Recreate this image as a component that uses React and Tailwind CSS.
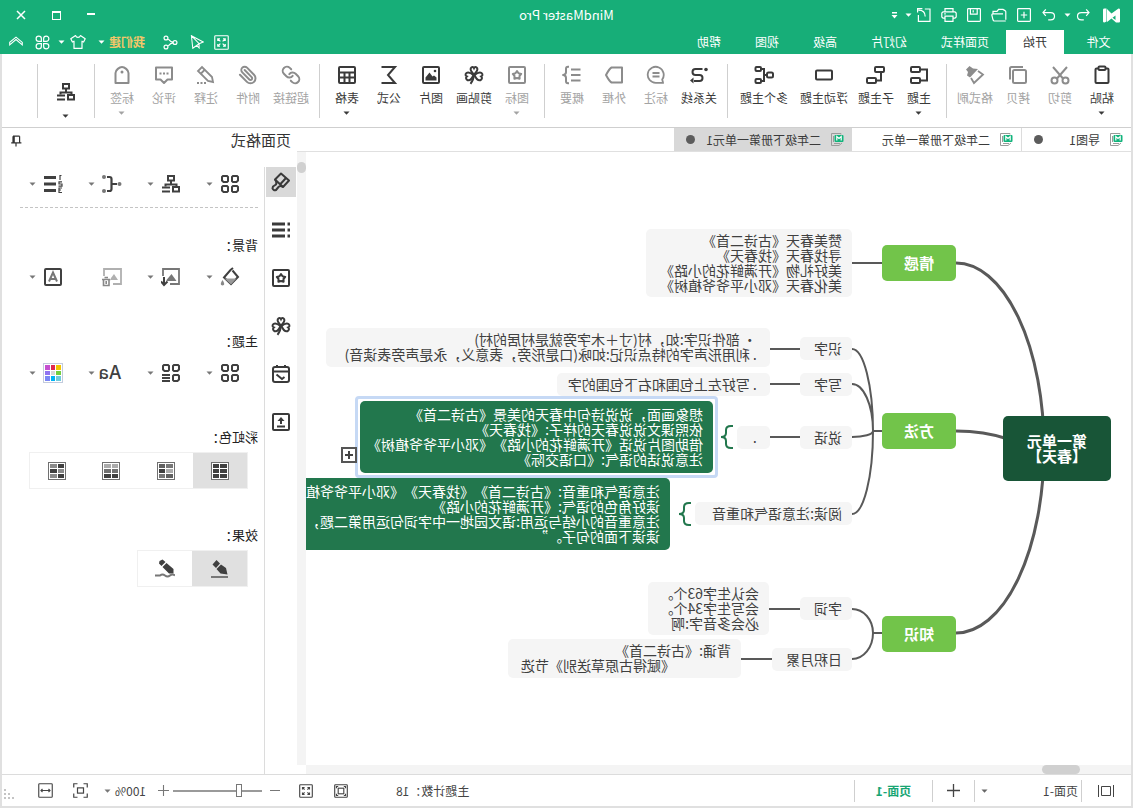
import React, { useState } from "react";
import clsx from "clsx";
import { Link, Paperclip } from "lucide-react";

const Icon = ({ size = 20, w = 2, className, children }) => (
  <svg
    width={size}
    height={size}
    viewBox="0 0 20 20"
    fill="none"
    stroke="currentColor"
    strokeWidth={w}
    className={clsx("shrink-0", className)}
    aria-hidden="true"
  >
    {children}
  </svg>
);

const Caret = ({ className }) => (
  <svg width="7" height="4" viewBox="0 0 7 4" fill="currentColor" className={clsx("shrink-0", className)} aria-hidden="true">
    <path d="M0.5 0.5h6L3.5 3.8z" />
  </svg>
);

const clover = (
  <>
    <path d="M10 9.500C7.500 7 5.800 5.500 6.800 3.200C7.800 1.200 9.500 1.800 10 3C10.500 1.800 12.200 1.200 13.200 3.200C14.200 5.500 12.500 7 10 9.500z" />
    <path d="M9.500 10C7 8 4.500 6.500 2.500 8C0.800 9.500 1.600 11 2.800 11.400C1.600 12.500 1.800 14.500 3.600 15.200C6 16 8 13.500 9.500 10z" />
    <path d="M10.500 10C13 8 15.500 6.500 17.500 8C19.200 9.500 18.400 11 17.200 11.400C18.400 12.500 18.200 14.500 16.400 15.200C14 16 12 13.500 10.500 10z" />
    <path d="M10 9.500C10.300 13 11 16 13.500 18.800" />
  </>
);

const badge = (
  <>
    <rect x="2" y="2" width="16" height="16" rx="1" />
    <path d="M10 6l1.500 2.200 2.700.7-1.700 2.100.1 2.800L10 13l-2.600.8.1-2.800-1.700-2.100 2.700-.7z" strokeLinejoin="round" />
  </>
);

const orgChart = (
  <>
    <rect x="7" y="2" width="6" height="4.500" />
    <path d="M10 7v3M4.500 12.500V10.500h11V12.500" />
    <rect x="2" y="13" width="6" height="4.500" />
    <path d="M11 13.500h8M11 17.500h8" />
  </>
);

const fourSquares = (
  <>
    <path d="M3 2h4l1 1v4L7 8H3.500L2 6.500V3z" />
    <path d="M13 2h4l1 1v3.500L16.500 8H13l-1-1V3z" />
    <path d="M3 12h4l1 1v4l-1 1H3.500L2 16.500V13z" />
    <path d="M13 12h4l1 1v3.500L16.500 18H13l-1-1v-4z" />
  </>
);

const icons = {
  paste: (
    <>
      <path d="M6 3.500H4.500a1 1 0 0 0-1 1V17a1 1 0 0 0 1 1h11a1 1 0 0 0 1-1V4.500a1 1 0 0 0-1-1H14" />
      <rect x="6.500" y="1.500" width="7" height="3.500" rx="1" />
    </>
  ),
  cut: (
    <>
      <path d="M3 2l10 11.500M17 2L7 13.500" />
      <circle cx="4.500" cy="15.500" r="3" />
      <circle cx="15.500" cy="15.500" r="3" />
    </>
  ),
  copy: (
    <>
      <rect x="2" y="5" width="13" height="13" rx="1.500" />
      <path d="M5 2h11.500A1.500 1.500 0 0 1 18 3.500V14.500" />
    </>
  ),
  brush: (
    <>
      <path d="M7 6L2 9.500l9 8.500 3-5" strokeWidth="1.800" />
      <path d="M19 4.500L15.500 1 12 3.500 7 4l8 8.500 3-2-1-3.500z" fill="currentColor" stroke="none" />
    </>
  ),
  topic: (
    <>
      <rect x="9" y="2" width="9" height="5" rx="1" />
      <rect x="9" y="13" width="9" height="5" rx="1" />
      <path d="M9 4.500H2v11h7" />
    </>
  ),
  subtopic: (
    <>
      <rect x="2" y="2" width="9" height="5" rx="1" />
      <rect x="10" y="13" width="9" height="5" rx="1" />
      <path d="M5 7v8.500h5" />
    </>
  ),
  floating: <rect x="2" y="5.500" width="16" height="9" rx="1" />,
  multi: (
    <>
      <rect x="1" y="7.500" width="6" height="5" rx="1.500" />
      <rect x="13" y="2" width="5.500" height="4" rx="1" />
      <rect x="13" y="14" width="5.500" height="4" rx="1" />
      <path d="M7 10h3M13 4h-3v12h3" />
    </>
  ),
  relation: (
    <>
      <path d="M6.500 4h7a3 3 0 0 1 0 6h-4a3 3 0 0 0 0 6H15" />
      <circle cx="3" cy="4.500" r="1.800" fill="currentColor" stroke="none" />
      <path d="M15.500 12.500l3.500 3-3.500 3z" fill="currentColor" stroke="none" />
    </>
  ),
  callout: (
    <>
      <path d="M3 17.500l.8-3A8 8 0 1 1 10 17.800H3z" strokeWidth="1.800" />
      <path d="M6.500 8h7M6.500 11.500h7" strokeWidth="1.800" />
    </>
  ),
  boundary: <path d="M2 2.500h10.500q2 1 5.500 7.500-3.500 6.500-5.500 7.500H2z" strokeLinejoin="round" />,
  summary: (
    <>
      <path d="M1.500 4.500h9.500M1.500 10h9.500M1.500 15.500h9.500" />
      <path d="M13 1.800h1q2 0 2 2v3.500q0 2 2.500 2.700-2.500.7-2.500 2.700v3.500q0 2-2 2h-1" />
    </>
  ),
  badge,
  clover,
  image: (
    <>
      <rect x="2" y="2" width="16" height="16" rx="1" />
      <path d="M4.500 15.500v-3l2.500-2 1.500 1 3-4 4 5v3z" fill="currentColor" stroke="none" />
      <circle cx="6" cy="6" r="1.300" fill="currentColor" stroke="none" />
    </>
  ),
  sigma: <path d="M17.500 2H4l7 8-7 8h13.500" />,
  table: (
    <>
      <rect x="2" y="2" width="16" height="16" rx="1" />
      <path d="M2 7.500h16M2 12.500h16M7.500 7.500V18M12.500 7.500V18" />
    </>
  ),
  pencil: (
    <>
      <path d="M3 17l1-5L14 2l4 4L8 16z" strokeWidth="1.800" />
      <path d="M11 4.500l4.500 4.500" strokeWidth="1.800" />
      <path d="M10 18h2M13.500 18h2M17 18h2" />
    </>
  ),
  comment: (
    <>
      <path d="M2 2.500h16v12h-4.500L10 18l-3.500-3.500H2z" strokeLinejoin="round" />
      <path d="M5.500 8.500h2M9 8.500h2M12.500 8.500h2" />
    </>
  ),
  tag: (
    <>
      <path d="M3.500 18V8C3.500 5 7.500 2 10 2s6.500 3 6.500 6v10z" strokeLinejoin="round" />
      <circle cx="10" cy="7" r="1.500" fill="currentColor" stroke="none" />
    </>
  ),
};

const quickIcons = {
  undo: <path d="M6 3L2.500 7 6 11M3 7h9c6.500 0 6.500 9 0 9H9" />,
  redo: <path d="M14 3l3.500 4L14 11M17 7H8C1.500 7 1.500 16 8 16h3" />,
  add: (
    <>
      <rect x="2" y="2" width="16" height="16" rx="1" />
      <path d="M10 6v8M6 10h8" />
    </>
  ),
  open: <path d="M1.500 16V6q0-1 1-1.500L5 3h5.500l2 2.500h5v3M1.500 17.500h14.500q1 0 1.500-1.500l1.500-6q0-1.500-1.500-1.500H5" />,
  save: (
    <>
      <rect x="2" y="2" width="16" height="16" rx="1" />
      <path d="M6 2v7h8.500V2M11 4v3" />
    </>
  ),
  print: (
    <>
      <path d="M5 6V2h10v4M5 14H2.500L1 12.500V7.500L2.500 6h15L19 7.500v5L17.500 14H15" />
      <path d="M5 11.500h10V18H5zM14 8.500h2" />
    </>
  ),
  export: <path d="M9 2.500H2.500v15.500H17V10M8.500 12c0-5 3-8 8.500-8M12 2h6v5" />,
};

const ribbon = [
  [
    { label: "粘贴", icon: "paste", caret: true },
    { label: "剪切", icon: "cut", off: true },
    { label: "拷贝", icon: "copy", off: true },
    { label: "格式刷", icon: "brush", off: true },
  ],
  [
    { label: "主题", icon: "topic", caret: true },
    { label: "子主题", icon: "subtopic" },
    { label: "浮动主题", icon: "floating" },
    { label: "多个主题", icon: "multi" },
  ],
  [
    { label: "关系线", icon: "relation" },
    { label: "标注", icon: "callout", off: true },
    { label: "外框", icon: "boundary", off: true },
    { label: "概要", icon: "summary", off: true },
  ],
  [
    { label: "图标", icon: "badge", off: true, caret: true },
    { label: "剪贴画", icon: "clover" },
    { label: "图片", icon: "image" },
    { label: "公式", icon: "sigma" },
    { label: "表格", icon: "table", caret: true },
  ],
  [
    { label: "超链接", lucide: Link, off: true },
    { label: "附件", lucide: Paperclip, off: true },
    { label: "注释", icon: "pencil", off: true },
    { label: "评论", icon: "comment", off: true },
    { label: "标签", icon: "tag", off: true, caret: true },
  ],
];

const itemWidth = { 2: "w-[42px]", 3: "w-[44px]", 4: "w-[60px]" };

const menus = [
  { label: "文件", style: "w-[69px]" },
  { label: "开始", style: "w-[58px]" },
  { label: "页面样式", style: "w-[82px]" },
  { label: "幻灯片", style: "w-[70px]" },
  { label: "高级", style: "w-[58px]" },
  { label: "视图", style: "w-[58px]" },
  { label: "帮助", style: "w-[58px]" },
];

const TitleBar = () => (
  <div className="relative flex h-[30px] items-center pl-[13px] text-white">
    <svg width="17" height="15" viewBox="0 0 17 15" fill="currentColor" aria-hidden="true">
      <path d="M0 1.500Q0 .5 1.500 .5L8.500 5.500 13 1V14L8.500 10.500 4 14.500H1Q0 14.500 0 13.500z" />
      <path d="M13.500 .5H15.500Q17 .5 17 1.500V13.500Q17 14.500 15.500 14.500L13.500 13.500z" />
      <path d="M4.500 7.500L7.500 9.800 4.500 12z" fill="#17ae78" />
    </svg>
    <button aria-label="撤销" className="ml-3"><Icon size={16} w={1.500}>{quickIcons.undo}</Icon></button>
    <Caret className="ml-1" />
    <div className="ml-[7px] flex items-center gap-[9px]">
      {["redo", "add", "open", "save", "print", "export"].map((name) => (
        <button key={name} aria-label={name}>
          <Icon size={16} w={1.500}>{quickIcons[name]}</Icon>
        </button>
      ))}
    </div>
    <Caret className="ml-1" />
    <button aria-label="更多" className="ml-[7px]">
      <svg width="7" height="7" viewBox="0 0 7 7" fill="currentColor">
        <path d="M1 0h5v1.500H1zM0.500 3h6L3.500 6.500z" />
      </svg>
    </button>
    <div className="absolute left-1/2 -translate-x-1/2 text-[13px]">MindMaster Pro</div>
    <div className="ml-auto flex items-center gap-[26px] pr-4">
      <button aria-label="最小化" className="mt-1 h-2 w-2 border-t-2 border-white" />
      <button aria-label="最大化" className="h-[9px] w-[9px] border border-t-2 border-white" />
      <button aria-label="关闭">
        <Icon size={10} w={3}><path d="M2 2l16 16M18 2L2 18" /></Icon>
      </button>
    </div>
  </div>
);

const MenuBar = () => {
  const [active, setActive] = useState("开始");

  return (
    <nav className="flex h-6 items-center text-xs text-white">
      <div className="flex h-full">
        {menus.map((item) => (
          <button
            key={item.label}
            onClick={() => setActive(item.label)}
            className={clsx("h-full", item.style, active === item.label && "bg-white text-[#333]")}
          >
            {item.label}
          </button>
        ))}
      </div>
      <div className="ml-auto flex items-center pr-[9px]">
        <button aria-label="全屏" className="mr-[10px]">
          <Icon size={15} w={1.500}>
            <rect x="1" y="1" width="18" height="18" rx="1" />
            <path d="M5 8V5h3M12 5h3v3M15 12v3h-3M8 15H5v-3M5 5l3.500 3.500M15 5l-3.500 3.500M15 15l-3.500-3.500M5 15l3.500-3.500" />
          </Icon>
        </button>
        <button aria-label="发送" className="mr-3">
          <Icon size={14} w={1.500}><path d="M18 1L1 10l6 2.500L16 19zM18 1L7 12.500v6l3.500-3.500" /></Icon>
        </button>
        <button aria-label="分享" className="mr-[18px]">
          <Icon size={15} w={1.600}>
            <circle cx="4" cy="10" r="2.600" />
            <circle cx="16" cy="4" r="2.600" />
            <circle cx="16" cy="16" r="2.600" />
            <path d="M6.500 9.500c3 0 4-1 6.500-4M6.500 10.500c3 0 4 1 6.500 4" />
          </Icon>
        </button>
        <button className="flex items-center font-bold text-[#f3c669]">
          我们建
          <Caret className="ml-1 text-white" />
        </button>
        <button aria-label="皮肤" className="ml-3 flex items-center gap-[5px]">
          <Icon size={16} w={1.500}>
            <path d="M7 2L1 6l2 4 2-1v9h10V9l2 1 2-4-6-4c-1 3-5 3-6 0z" strokeLinejoin="round" />
          </Icon>
          <Caret />
        </button>
        <button aria-label="应用" className="ml-2">
          <Icon size={15} w={1.600}>
            <path d="M8.500 8.500H5A3.500 3.500 0 1 1 8.500 5zM11.500 8.500V5A3.500 3.500 0 1 1 15 8.500zM8.500 11.500V15A3.500 3.500 0 1 1 5 11.500zM11.500 11.500H15a3.500 3.500 0 1 1-3.500 3.500z" />
          </Icon>
        </button>
        <button aria-label="收起" className="ml-3">
          <Icon size={14} w={1.500}><path d="M1 10.500l9-7.500 9 7.500v3.500l-9-7.500-9 7.500z" /></Icon>
        </button>
      </div>
    </nav>
  );
};

const Separator = () => <div className="mx-[6px] h-[54px] w-px bg-[#cfcfcf]" />;

const Ribbon = () => (
  <div className="flex h-[74px] items-start border-b border-[#cfcfcf] bg-white pt-[10px] pl-2 text-xs">
    {ribbon.map((group, i) => (
      <React.Fragment key={i}>
        {group.map((item) => (
          <button
            key={item.label}
            className={clsx(
              "flex shrink-0 flex-col items-center whitespace-nowrap",
              itemWidth[item.label.length],
              item.off ? "text-[#a3a3a3]" : "text-[#3a3a3a]"
            )}
          >
            {item.lucide ? (
              <item.lucide size={20} strokeWidth={2.4} className="mt-px text-[#8c8c8c]" />
            ) : (
              <Icon className={clsx("mt-px", item.off && "text-[#8c8c8c]")}>{icons[item.icon]}</Icon>
            )}
            <span className="mt-[5px] leading-4">{item.label}</span>
            {item.caret && <Caret className="mt-[5px]" />}
          </button>
        ))}
        <Separator />
      </React.Fragment>
    ))}
    <button aria-label="布局" className="flex w-[44px] flex-col items-center pt-[18px] text-[#3a3a3a]">
      <Icon>{orgChart}</Icon>
      <Caret className="mt-3" />
    </button>
    <Separator />
  </div>
);

const DocIcon = () => (
  <svg width="14" height="15" viewBox="0 0 14 15" fill="none" aria-hidden="true">
    <path d="M3 2.500V1.500h9.500v12H5L2 11" stroke="#9b9b9b" />
    <path d="M4 11.500h6M10.500 4v6" stroke="#9b9b9b" />
    <rect x="0.500" y="3" width="9" height="7" rx="1" fill="#12b47c" />
    <path d="M2.800 8.500v-4L5 6.500l2.200-2v4" stroke="#fff" strokeWidth="1.200" />
  </svg>
);

const docs = [
  { name: "导图1", dirty: true, style: "w-[110px] border-r border-[#dcdcdc]" },
  { name: "二年级下册第一单元", style: "w-[169px]" },
  { name: "二年级下册第一单元1", dirty: true, style: "w-[178px] bg-[#d8d8d8]" },
];

const DocTabs = () => (
  <div className="flex h-6 border-b border-[#e0e0e0]">
    {docs.map((doc) => (
      <button key={doc.name} className={clsx("flex items-center pl-2 text-xs text-[#3a3a3a]", doc.style)}>
        <DocIcon />
        <span className="ml-[9px] whitespace-nowrap">{doc.name}</span>
        {doc.dirty && <span className="mr-3 ml-auto h-[9px] w-[9px] rounded-full bg-[#5c5c5c]" />}
      </button>
    ))}
  </div>
);

const plain = "bg-[#f5f5f5] text-[#404040] text-sm leading-[15px]";
const strong = "bg-[#72c44a] text-white text-[15px] leading-[15px] font-bold items-center";
const deep = "bg-[#22774d] text-white text-sm leading-[15px]";

const nodes = [
  { at: [20, 264, 108, 65], look: "bg-[#185537] text-white text-[15px] leading-[15px] font-bold items-center", text: ["第一单元", "【春天】"] },
  { at: [175, 93, 74, 36], look: strong, text: ["情感"] },
  { at: [175, 261, 74, 36], look: strong, text: ["方法"] },
  { at: [175, 464, 74, 36], look: strong, text: ["知识"] },
  {
    at: [279, 77, 206, 68],
    look: plain,
    text: ["赞美春天《古诗二首》", "寻找春天《找春天》", "美好礼物《开满鲜花的小路》", "美化春天《邓小平爷爷植树》"],
  },
  { at: [279, 185, 52, 23], look: plain, text: ["识字"] },
  { at: [279, 221, 52, 23], look: plain, text: ["写字"] },
  { at: [279, 274, 52, 23], look: plain, text: ["说话"] },
  { at: [279, 350, 157, 23], look: plain, text: ["阅读:注意语气和重音"] },
  {
    at: [361, 176, 444, 39],
    look: plain,
    text: [" · 部件识字:如，村(寸＋木字旁就是村居的村)", " . 利用形声字的特点识记:如咏(口是形旁，表意义，永是声旁表读音)"],
  },
  { at: [361, 221, 213, 23], look: plain, text: [" . 写好左上包围和右下包围的字"] },
  { at: [361, 274, 33, 23], look: plain, text: [" ."] },
  {
    at: [418, 249, 353, 72],
    look: deep,
    text: [
      "想象画面，说说诗句中春天的美景《古诗二首》",
      "依照课文说说春天的样子:《找春天》",
      "借助图片说话《开满鲜花的小路》《邓小平爷爷植树》",
      "注意说话的语气:《口语交际》",
    ],
  },
  {
    at: [461, 326, 420, 72],
    look: deep,
    text: [
      "注意语气和重音:《古诗二首》《找春天》《邓小平爷爷植树》",
      "读好角色的语气:《开满鲜花的小路》",
      "注意重音的小结与运用:语文园地一中字词句运用第二题，",
      "读读下面的句子。”",
    ],
  },
  { at: [279, 445, 52, 23], look: plain, text: ["字词"] },
  { at: [279, 496, 80, 23], look: plain, text: ["日积月累"] },
  { at: [362, 430, 121, 53], look: plain, text: ["会认生字63个。", "会写生字34个。", "必会多音字:啊"] },
  { at: [390, 487, 233, 39], look: plain, text: ["背诵:《古诗二首》", "　　　　《赋得古原草送别》节选"] },
];

const MindMap = () => (
  <div className="relative min-h-0 flex-1 overflow-hidden bg-white">
    <svg width="825" height="613" className="absolute top-0 left-0" fill="none" stroke="#595959" strokeWidth="2" aria-hidden="true">
      <g strokeWidth="3">
        <path d="M87 296A88 185 0 0 1 175 111" />
        <path d="M87 296A88 185 0 0 0 175 481" />
        <path d="M123 287C138 282 153 279 175 279" />
      </g>
      <path d="M249 111H279M249 279H258M249 481H258" />
      <path d="M258 279A21 82 0 0 1 279 197M258 279A21 47 0 0 1 279 232" />
      <path d="M258 279A21 6 0 0 0 279 285M258 279A21 83 0 0 0 279 362" />
      <path d="M258 481A21 24 0 0 1 279 457M258 481A21 26 0 0 0 279 507" />
      <path d="M331 197H361M331 232H361M331 285H361M331 457H362M359 507H390" />
      <g stroke="#22774d">
        <path d="M398 274h2q5 0 5 4v3q0 4 5 4q-5 0-5 4v3q0 4-5 4h-2" />
        <path d="M440 351h2q5 0 5 4v3q0 4 5 4q-5 0-5 4v3q0 4-5 4h-2" />
      </g>
    </svg>
    {nodes.map(({ at: [left, top, width, height], look, text }) => (
      <div
        key={`${left}-${top}`}
        className={clsx("absolute flex flex-col justify-center rounded-[5px] px-[10px] pb-px whitespace-pre [text-spacing-trim:space-all]", look)}
        style={{ left, top, width, height }}
      >
        {text.map((line) => (
          <div key={line}>{line}</div>
        ))}
      </div>
    ))}
    <div className="absolute top-[244px] left-[413px] h-[82px] w-[363px] rounded-[4px] border-[3px] border-[#c6d9f5]" />
    <button
      aria-label="展开"
      className="absolute top-[295px] left-[774px] flex h-4 w-4 items-center justify-center border-2 border-[#555] bg-white text-[#444]"
    >
      <Icon size={10} w={4}><path d="M10 2v16M2 10h16" /></Icon>
    </button>
  </div>
);

const sideIcons = [
  <>
    <path d="M10 1.500L2 8.500l6 6.500 8-7.500z" strokeLinejoin="round" />
    <path d="M5 6l6 6.500" />
    <path d="M8 15c2-1.500 3.500-1.500 4.500 0l2.500 3q2.500 1 3.500-1.500l-.5-2-3-2c-1-1.500-.5-3 1-5" strokeLinejoin="round" />
  </>,
  <path d="M1 4h2.500M6 4h13M1 10h2.500M6 10h13M1 16h2.500M6 16h13" strokeWidth="3" />,
  badge,
  clover,
  <>
    <rect x="2" y="3" width="16" height="15" rx="2" />
    <path d="M2 7.500h16M6 1v3M14 1v3M14.500 10.500L9 15l-2.500-2" />
  </>,
  <>
    <rect x="2" y="2" width="16" height="16" rx="1" />
    <path d="M6 14.500h8M10 12V7" />
    <path d="M6.500 9L10 5l3.500 4z" fill="currentColor" stroke="none" />
  </>,
];

const ToolCell = ({ label, caret = true, children }) => (
  <button aria-label={label} className="flex w-[59px] shrink-0 items-center text-[#404040]">
    {children}
    {caret && <Caret className="ml-[7px] text-[#777]" />}
  </button>
);

const SectionTitle = ({ children, className }) => (
  <h3 className={clsx("text-[13px] leading-5 text-[#222]", className)}>{children}</h3>
);

const palette = ["#f2c500", "#e0294f", "#c44fcf", "#72cf3f", "#d9d9d9", "#8f73f0", "#6fcbdc", "#00b4f5", "#7a86f5"];

const rainbows = [
  ["#404040", "#404040", "#404040", "#404040", "#404040", "#404040"],
  ["#777777", "#606060", "#ababab", "#404040", "#606060", "#777777"],
  ["#ababab", "#ababab", "#707070", "#707070", "#404040", "#404040"],
  ["#404040", "#8a8a8a", "#8a8a8a", "#404040", "#404040", "#8a8a8a"],
];

const FormatPanel = () => {
  const [rainbow, setRainbow] = useState(0);

  return (
    <aside className="flex w-[295px] shrink-0 flex-col bg-white">
      <div className="flex h-[25px] items-center justify-between pr-2 pl-[6px] text-[15px] text-[#333]">
        页面格式
        <button aria-label="固定">
          <Icon size={12} w={2}><path d="M4 2h11M4 2v11M15 2v11M13 2v11M1 13h17M10 13v6" /></Icon>
        </button>
      </div>
      <div className="flex flex-1 pt-[14px]">
        <div className="flex w-[33px] shrink-0 flex-col gap-[18px] border-r border-[#dcdcdc] pl-px">
          {sideIcons.map((icon, i) => (
            <button
              key={i}
              aria-label={`面板${i + 1}`}
              className={clsx("flex h-[30px] w-[30px] items-center justify-center text-[#3a3a3a]", i === 0 && "bg-[#d9d9d9]")}
            >
              <Icon>{icon}</Icon>
            </button>
          ))}
        </div>

        <div className="min-w-0 flex-1 pr-[18px] pl-[6px]">
          <div className="flex pt-[7px] pl-[18px]">
            <ToolCell label="主题"><Icon>{fourSquares}</Icon></ToolCell>
            <ToolCell label="布局"><Icon>{orgChart}</Icon></ToolCell>
            <ToolCell label="连线">
              <Icon>
                <path d="M5 10h5.500M15 3h-2.500q-2 0-2 2v10q0 2 2 2H15" strokeWidth="2.200" />
                <g fill="#777" stroke="none">
                  <circle cx="2.500" cy="10" r="2" />
                  <circle cx="18" cy="3" r="2" />
                  <circle cx="18" cy="17" r="2" />
                </g>
              </Icon>
            </ToolCell>
            <ToolCell label="编号">
              <Icon>
                <path d="M7 3.500h12M7 10h12M7 16.500h12" strokeWidth="3" />
                <path d="M1.500 1.500h1.500V6M1 7.800h3v2.200h-3v2.200h3.500M1 14h3v2h-2h2v2.500h-3" strokeWidth="1.200" />
              </Icon>
            </ToolCell>
          </div>
          <div className="mt-[13px] border-t border-dashed border-[#c4c4c4]" />

          <SectionTitle className="mt-[27px]">背景：</SectionTitle>
          <div className="mt-3 flex pl-[18px]">
            <ToolCell label="填充">
              <Icon>
                <path d="M7.500 3.500L2 10l7 7 7-6.500L9.500 3 7 1" />
                <path d="M3.500 11.500h12L9 17.500z" fill="#999" stroke="none" />
                <path d="M17.500 13q3.500 5 0 5.500-3.500-.5 0-5.500z" fill="#888" stroke="none" />
              </Icon>
            </ToolCell>
            <ToolCell label="背景图片">
              <Icon className="text-[#777]">
                <path d="M11 17H2V2h16v7" strokeWidth="1.800" />
                <path d="M4.500 14l5-7 5 6v1z" fill="currentColor" stroke="none" />
                <path d="M17 10v7.500M13.500 14.500l3.500 3.500 3-3.500" stroke="#404040" />
              </Icon>
            </ToolCell>
            <ToolCell label="删除背景" caret={false}>
              <Icon className="text-[#b0b0b0]">
                <path d="M9 17H1V2h17v7" strokeWidth="1.800" />
                <path d="M4 13l4-6 3 4v2z" fill="currentColor" stroke="none" />
                <path d="M11.500 12.500h8.500M13 13v5.500h5.500V13M14 10.500h3.500M15.800 14v3" stroke="#888" strokeWidth="1.600" />
              </Icon>
            </ToolCell>
            <ToolCell label="水印">
              <Icon>
                <rect x="2" y="2" width="16" height="16" rx="1" />
                <path d="M6 14.500L10 5.500l4 9M7.500 12h5" stroke="#777" />
              </Icon>
            </ToolCell>
          </div>

          <SectionTitle className="mt-11">主题：</SectionTitle>
          <div className="mt-3 flex items-center pl-[18px]">
            <ToolCell label="样式"><Icon>{fourSquares}</Icon></ToolCell>
            <ToolCell label="主题列表">
              <Icon>
                <path d="M3 2h4l1 1v4L7 8H3.500L2 6.500V3zM13 2h4l1 1v3.500L16.500 8H13l-1-1V3zM3 12h4l1 1v4l-1 1H3.500L2 16.500V13z" />
                <path d="M11 12h8M11 15h8M11 18h8" />
              </Icon>
            </ToolCell>
            <button className="flex w-[59px] shrink-0 items-center text-lg leading-5 font-medium text-[#404040]">
              <span className="w-6 font-['Inter',sans-serif]">Aa</span>
              <Caret className="ml-[3px] text-[#777]" />
            </button>
            <ToolCell label="配色">
              <span className="grid h-5 w-5 grid-cols-3 gap-px border border-[#c3cbdd] bg-white p-px">
                {palette.map((c) => (
                  <span key={c} style={{ backgroundColor: c }} />
                ))}
              </span>
            </ToolCell>
          </div>

          <SectionTitle className="mt-11">彩虹色：</SectionTitle>
          <div className="mt-[5px] ml-[10px] flex h-[37px] w-[219px] border border-[#f0f0f0]">
            {rainbows.map((cells, i) => (
              <button
                key={i}
                aria-label={`彩虹色${i + 1}`}
                onClick={() => setRainbow(i)}
                className={clsx("flex flex-1 items-center justify-center", rainbow === i && "bg-[#e0e0e0]")}
              >
                <span className="grid h-[18px] w-[18px] grid-cols-2 gap-px border border-[#707070] bg-white p-px">
                  {cells.map((c, j) => (
                    <span key={j} style={{ backgroundColor: c }} />
                  ))}
                </span>
              </button>
            ))}
          </div>

          <SectionTitle className="mt-9">效果：</SectionTitle>
          <div className="mt-[5px] ml-[10px] flex h-[37px] w-[111px] border border-[#f0f0f0]">
            <button aria-label="直线" className="flex flex-1 items-center justify-center bg-[#e0e0e0] text-[#404040]">
              <Icon>
                <path d="M2.500 15.500L4 9l5-3.500 4.500 4.500-4 4.500zM10 4.500L13.500 1l4 4.500-3.500 3.500z" fill="currentColor" stroke="none" />
                <path d="M2 18h17" stroke="#777" />
              </Icon>
            </button>
            <button aria-label="手绘" className="flex flex-1 items-center justify-center text-[#404040]">
              <Icon>
                <path d="M1.500 14.500V10L8.500 4l4 4L6 14.500zM9.500 3L12.500 .5l3 1.500.5 2.500L13.500 7z" fill="currentColor" stroke="none" />
                <path d="M0 16.500q2.500-2 5 0t5 0 5 0h5" stroke="#777" />
              </Icon>
            </button>
          </div>
        </div>
      </div>
    </aside>
  );
};

const StatusBar = () => {
  const [zoom, setZoom] = useState(24);

  return (
    <footer className="flex h-[32px] items-center border-t border-[#dcdcdc] bg-white text-xs text-[#444]">
      <button aria-label="页面视图" className="ml-[17px]">
        <svg width="16" height="12" viewBox="0 0 16 12" fill="none" stroke="currentColor">
          <path d="M0.500 0v12M15.500 0v12M3.500 1.500h9v9h-9z" />
        </svg>
      </button>
      <div className="relative ml-4 flex h-[22px] w-[108px] items-center border-x border-[#cfcfcf]">
        <select aria-label="页面" className="h-full w-full appearance-none bg-transparent pl-[3px] outline-none">
          <option>页面-1</option>
        </select>
        <Caret className="pointer-events-none absolute right-[6px] text-[#666]" />
      </div>
      <button aria-label="添加页面" className="flex h-[22px] w-[42px] items-center justify-center border-r border-[#cfcfcf]">
        <Icon size={13} w={2}><path d="M10 0v20M0 10h20" /></Icon>
      </button>
      <button className="h-[22px] w-[78px] border-r border-[#cfcfcf] font-bold text-[#18a573]">页面-1</button>

      <div className="ml-auto flex items-center">
        <span className="mr-12">主题计数：18</span>
        <button aria-label="适应页面" className="mr-[21px]">
          <Icon size={14} w={1.600}>
            <rect x="1" y="1" width="18" height="18" rx="1" />
            <rect x="6" y="6" width="8" height="8" />
            <path d="M3.500 6V3.500H6M14 3.500h2.500V6M16.500 14v2.500H14M6 16.500H3.500V14" />
          </Icon>
        </button>
        <button aria-label="全屏" className="mr-[19px]">
          <Icon size={14} w={1.600}>
            <rect x="1" y="1" width="18" height="18" rx="1" />
            <path d="M5 8V5h3M12 5h3v3M15 12v3h-3M8 15H5v-3M5 5l3 3M15 5l-3 3M15 15l-3-3M5 15l3-3" />
          </Icon>
        </button>
        <button aria-label="缩小" className="h-px w-[10px] bg-[#777]" />
        <input
          type="range"
          aria-label="缩放"
          value={zoom}
          onChange={(e) => setZoom(e.target.value)}
          className="mr-1 ml-2 h-[2px] w-[89px] appearance-none bg-[#9a9a9a] [&::-webkit-slider-thumb]:h-[13px] [&::-webkit-slider-thumb]:w-[6px] [&::-webkit-slider-thumb]:appearance-none [&::-webkit-slider-thumb]:border [&::-webkit-slider-thumb]:border-[#777] [&::-webkit-slider-thumb]:bg-white"
        />
        <button aria-label="放大">
          <Icon size={11} w={2} className="text-[#777]"><path d="M10 0v20M0 10h20" /></Icon>
        </button>
        <button className="ml-3 flex items-center">
          100%
          <Caret className="ml-1 text-[#777]" />
        </button>
        <button aria-label="居中" className="ml-4">
          <Icon size={15} w={1.600}>
            <path d="M1 6V1h5M14 1h5v5M19 14v5h-5M6 19H1v-5" />
            <rect x="6" y="6.500" width="8" height="7" />
          </Icon>
        </button>
        <button aria-label="适应宽度" className="ml-5">
          <Icon size={15} w={1.500}>
            <rect x="1" y="1" width="18" height="18" rx="1" />
            <path d="M4 10h12M6 8l-2 2 2 2M14 8l2 2-2 2" />
          </Icon>
        </button>
        <svg width="10" height="10" viewBox="0 0 10 10" fill="#c4c4c4" className="mr-[2px] ml-6 self-end" aria-hidden="true">
          <path d="M8 0h2v2H8zM8 4h2v2H8zM4 4h2v2H4zM8 8h2v2H8zM4 8h2v2H4zM0 8h2v2H0z" />
        </svg>
      </div>
    </footer>
  );
};

const App = () => {
  return (
    <div className="flex h-screen w-full -scale-x-100 flex-col overflow-hidden bg-[#e0e0e0] font-['Noto_Sans_CJK_SC',sans-serif]">
      <header className="bg-[#17ae78]">
        <TitleBar />
        <MenuBar />
      </header>
      <div className="flex min-h-0 flex-1 flex-col border-x-2 border-b-2 border-[#e0e0e0]">
        <Ribbon />
        <div className="flex min-h-0 flex-1 bg-white">
          <main className="flex min-w-0 flex-1 flex-col">
            <DocTabs />
            <div className="flex min-h-0 flex-1">
              <div className="flex min-w-0 flex-1 flex-col">
                <MindMap />
                <div className="h-[9px] bg-[#f4f4f4] pl-[51px]">
                  <div className="h-full w-[38px] rounded-full bg-[#d0d0d0]" />
                </div>
              </div>
              <div className="mb-[9px] w-[9px] bg-[#f4f4f4] pt-[10px]">
                <div className="h-[11px] rounded-full bg-[#d0d0d0]" />
              </div>
            </div>
          </main>
          <FormatPanel />
        </div>
        <StatusBar />
      </div>
    </div>
  );
};

export default App;
